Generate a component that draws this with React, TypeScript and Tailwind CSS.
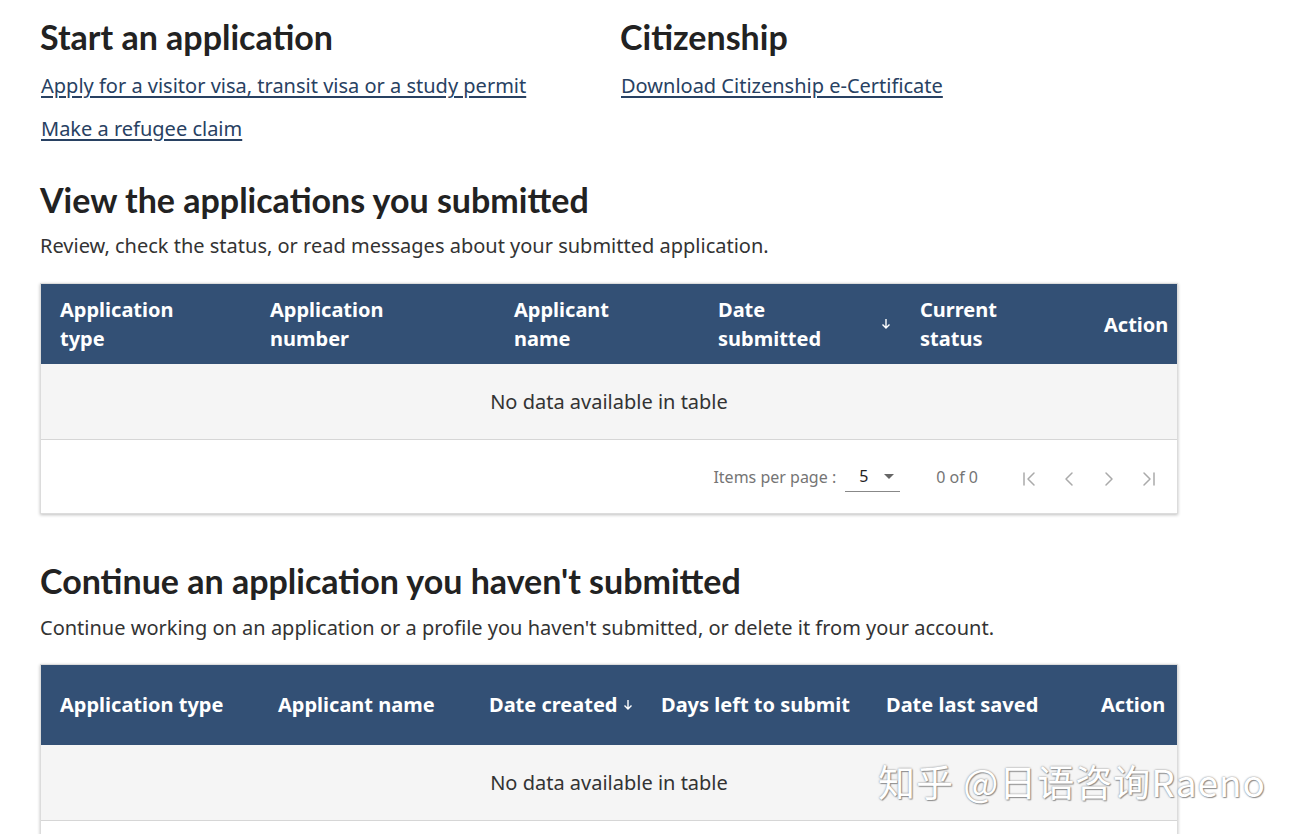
import { ChevronLeft, ChevronRight, ChevronFirst, ChevronLast } from 'lucide-react';

const body = { fontFamily: '"Noto Sans", "Open Sans", sans-serif' };
const head = { fontFamily: 'Lato, "Liberation Sans", sans-serif' };

function Paginator() {
  return (
    <div className="flex h-[73px] items-center justify-end bg-white pr-[16px] text-[16px] text-[#757575]">
      <span>Items per page :</span>
      <div className="ml-[9px] flex h-[30px] w-[55px] items-center justify-between border-b border-[#888] pl-[14px] pr-[4px] text-[#222]">
        <span>5</span>
        <svg width="10" height="5" viewBox="0 0 10 5" className="mr-[2px]">
          <path d="M0 0h10L5 5z" fill="#666" />
        </svg>
      </div>
      <span className="ml-[36px]">0 of 0</span>
      <div className="ml-[39px] mt-[4px] flex items-center gap-[16px] text-[#aaa]">
        <ChevronFirst size={24} strokeWidth={1.5} />
        <ChevronLeft size={24} strokeWidth={1.5} />
        <ChevronRight size={24} strokeWidth={1.5} />
        <ChevronLast size={24} strokeWidth={1.5} />
      </div>
    </div>
  );
}

function SortArrow() {
  return (
    <svg width="10" height="12" viewBox="0 0 10 12" className="shrink-0">
      <path d="M5 1v9M1.5 6.5 5 10l3.5-3.5" stroke="#fff" strokeWidth="1.4" fill="none" />
    </svg>
  );
}

function EmptyRow() {
  return (
    <div className="flex h-[76px] items-center justify-center border-b border-[#d6d6d6] bg-[#f5f5f5] text-[20px] text-[#333]">
      No data available in table
    </div>
  );
}

export default function App() {
  return (
    <div className="relative min-h-screen bg-white pl-[40px] pt-[15px] text-[#333]" style={body}>
      <div className="grid grid-cols-[580px_1fr]">
        <div>
          <h2 className="text-[34px] font-bold leading-[44px] text-[#222]" style={head}>Start an application</h2>
          <div className="mt-[12px] flex flex-col gap-[14px] pl-[1px] text-[20px] leading-[29px] text-[#284162]">
            <a href="#" className="w-fit underline underline-offset-[3px]">Apply for a visitor visa, transit visa or a study permit</a>
            <a href="#" className="w-fit underline underline-offset-[3px]">Make a refugee claim</a>
          </div>
        </div>
        <div>
          <h2 className="text-[34px] font-bold leading-[44px] text-[#222]" style={head}>Citizenship</h2>
          <div className="mt-[12px] pl-[1px] text-[20px] leading-[29px] text-[#284162]">
            <a href="#" className="underline underline-offset-[3px]">Download Citizenship e-Certificate</a>
          </div>
        </div>
      </div>

      <h2 className="mt-[35px] text-[34px] font-bold leading-[44px] text-[#222]" style={head}>View the applications you submitted</h2>
      <p className="mt-[9px] text-[20px] leading-[29px]">Review, check the status, or read messages about your submitted application.</p>

      <div className="mt-[23px] w-[1138px] border border-[#dcdcdc] shadow-[0_1px_3px_rgba(0,0,0,0.25)]">
        <div className="grid h-[80px] grid-cols-[210px_244px_204px_202px_184px_1fr] items-center bg-[#335075] text-[20px] font-bold leading-[29px] text-white">
          <div className="pl-[19px]">Application<br />type</div>
          <div className="pl-[19px]">Application<br />number</div>
          <div className="pl-[19px]">Applicant<br />name</div>
          <div className="flex items-center justify-between pl-[19px] pr-[10px]">
            <span>Date<br />submitted</span>
            <SortArrow />
          </div>
          <div className="pl-[19px]">Current<br />status</div>
          <div className="pl-[19px]">Action</div>
        </div>
        <EmptyRow />
        <Paginator />
      </div>

      <h2 className="mt-[45px] text-[34px] font-bold leading-[44px] text-[#222]" style={head}>Continue an application you haven't submitted</h2>
      <p className="mt-[10px] text-[20px] leading-[29px]">Continue working on an application or a profile you haven't submitted, or delete it from your account.</p>

      <div className="mt-[22px] w-[1138px] border border-[#dcdcdc] shadow-[0_1px_3px_rgba(0,0,0,0.25)]">
        <div className="grid h-[80px] grid-cols-[218px_211px_172px_225px_215px_1fr] items-center whitespace-nowrap bg-[#335075] text-[20px] font-bold text-white">
          <div className="pl-[19px]">Application type</div>
          <div className="pl-[19px]">Applicant name</div>
          <div className="flex items-center gap-[6px] pl-[19px]">
            <span>Date created</span>
            <SortArrow />
          </div>
          <div className="pl-[19px]">Days left to submit</div>
          <div className="pl-[19px]">Date last saved</div>
          <div className="pl-[19px]">Action</div>
        </div>
        <EmptyRow />
        <Paginator />
      </div>

      <div
        className="pointer-events-none absolute left-[878px] top-[757px] text-[37px] leading-[48px] tracking-[1px] text-white [text-shadow:0_0_2px_#777,1px_1px_1px_#999]"
        style={{ fontFamily: '"Noto Sans CJK SC", "Noto Sans", sans-serif' }}
      >
        知乎 @日语咨询Raeno
      </div>
    </div>
  );
}
